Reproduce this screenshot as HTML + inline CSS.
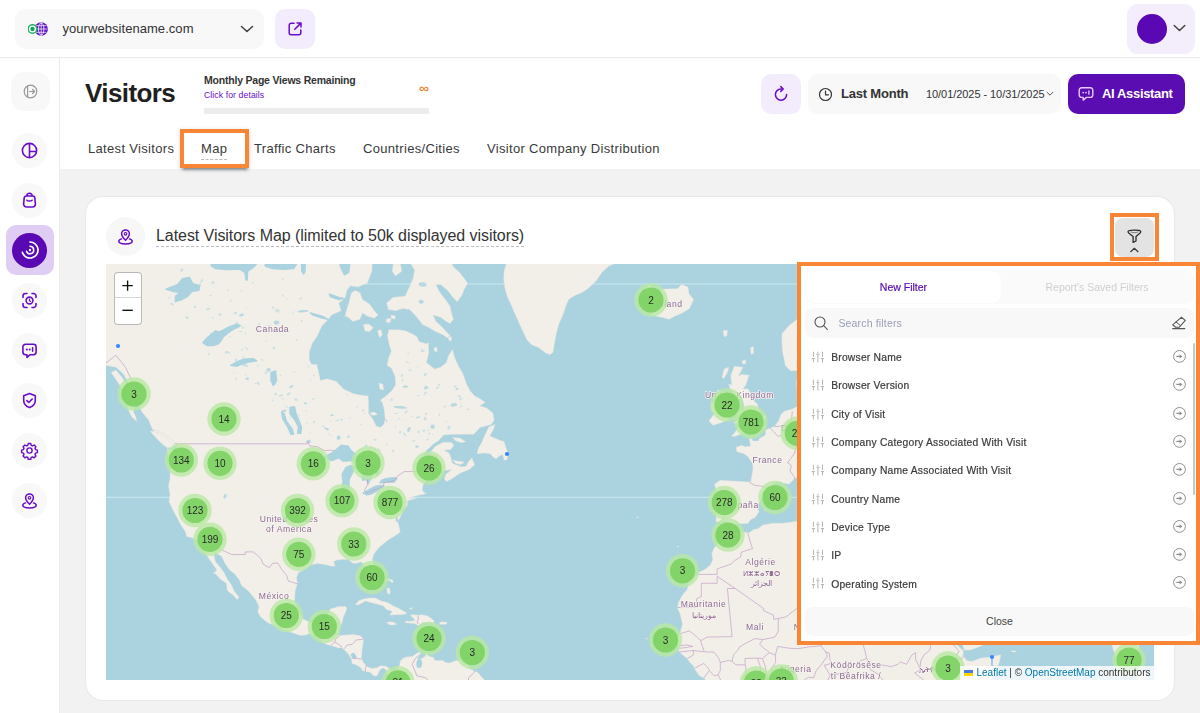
<!DOCTYPE html>
<html lang="en">
<head>
<meta charset="utf-8">
<title>Visitors - Map</title>
<style>
*{box-sizing:border-box;margin:0;padding:0}
html,body{width:1200px;height:713px;overflow:hidden}
body{font-family:"Liberation Sans",sans-serif;background:#f2f2f2;color:#333;position:relative}
.abs{position:absolute}
/* top bar */
#topbar{position:absolute;left:0;top:0;width:1200px;height:58px;background:#fff;border-bottom:1px solid #ebebeb}
#site{position:absolute;left:15px;top:9px;width:249px;height:40px;border-radius:11px;background:#f8f8f8}
#site .name{position:absolute;left:47.500px;top:12px;font-size:13px;color:#333;letter-spacing:.05px;white-space:nowrap}
#ext{position:absolute;left:275px;top:9px;width:40px;height:40px;border-radius:10px;background:#f3ecfd}
#profile{position:absolute;left:1127px;top:4px;width:68px;height:50px;border-radius:11px;background:#f4eefc}
#profile .av{position:absolute;left:10px;top:10px;width:30px;height:30px;border-radius:50%;background:#5a07b4}
/* sidebar */
#sidebar{position:absolute;left:0;top:58px;width:60px;height:655px;background:#fff;border-right:1px solid #ebebeb}
.sb{position:absolute;left:10.500px;width:39px;height:39px;border-radius:13px;background:#f8f8f8}
.sb svg{position:absolute;left:0;top:0}
.sb.r{left:12px;width:35px;height:35px;border-radius:50%}
.sb.r svg{left:-2px;top:-2px}
#sbact{position:absolute;left:5.600px;top:167.200px;width:48.300px;height:49.800px;border-radius:10px;background:#dfcdf4}
#sbact .c{position:absolute;left:6.700px;top:7.400px;width:35px;height:35px;border-radius:50%;background:#5a07b4}
/* header */
#header{position:absolute;left:60px;top:58px;width:1140px;height:111.400px;background:#fff}
#h1{position:absolute;left:25px;top:20px;font-size:26px;font-weight:bold;color:#1f1f1f;letter-spacing:-.6px;white-space:nowrap}
#mpv{position:absolute;left:144px;top:16px;font-size:10.500px;font-weight:bold;color:#333;white-space:nowrap;letter-spacing:-.21px}
#cfd{position:absolute;left:144px;top:31.500px;font-size:8.700px;color:#6a0dc9;white-space:nowrap;letter-spacing:.08px}
#pbar{position:absolute;left:144px;top:49.500px;width:225px;height:6.500px;background:#ececec;border-radius:1px}
#inf{position:absolute;left:359px;top:22.500px;font-size:14px;color:#f0883a;font-weight:bold;line-height:14px}
.hbtn{position:absolute;top:16px;height:40px;border-radius:10px}
#refresh{left:701px;width:40px;background:#f3ecfd}
#date{left:748px;width:253px;background:#f8f8f8}
#date .lm{position:absolute;left:33px;top:12px;font-size:13px;font-weight:bold;color:#333;white-space:nowrap;letter-spacing:-.2px}
#date .rng{position:absolute;left:118px;top:14px;font-size:11px;color:#333;white-space:nowrap;letter-spacing:-.06px}
#ai{left:1008px;width:117px;background:#5a0db0}
#ai span{position:absolute;left:34px;top:12px;font-size:13px;font-weight:bold;color:#fff;white-space:nowrap;letter-spacing:-.35px}
.tab{position:absolute;top:83px;font-size:13px;color:#3a3a3a;white-space:nowrap;letter-spacing:.32px}
#obox1{position:absolute;left:180px;top:129px;width:69px;height:39px;border:4px solid #f98634;box-shadow:0 3px 3px -1.500px rgba(30,40,50,.6),0 1px 5px rgba(0,0,0,.15)}
/* card */
#card{position:absolute;left:86px;top:197px;width:1088px;height:503px;background:#fff;border-radius:17px;box-shadow:0 0 2px rgba(0,0,0,.12)}
#cicon{position:absolute;left:20px;top:20px;width:39px;height:39px;border-radius:50%;background:#f7f7f7}
#ctitle{position:absolute;left:70px;top:30.300px;font-size:16px;color:#333;white-space:nowrap;border-bottom:1px dashed #bdbdbd;padding-bottom:.7px;letter-spacing:-.06px}
#fbtn{position:absolute;left:1115px;top:218px;width:39px;height:39px;border-radius:8px;background:#e3e3e3}
#obox2{position:absolute;left:1110px;top:213px;width:49px;height:48px;border:4px solid #f98634}
/* map */
#map{position:absolute;left:106px;top:264px;width:1048px;height:416px;overflow:hidden;background:#aad3df}
#map svg{position:absolute;left:0;top:0}
#zoomc{position:absolute;left:8px;top:8px;width:28px;height:53px;border:1.500px solid rgba(0,0,0,.22);border-radius:4px;background:#fff;background-clip:padding-box}
#zoomc div{height:24px;position:relative}
#zoomc div+div{border-top:1px solid #d4d4d4;height:26px}
#zoomc svg{position:absolute;left:0;top:0}
#attr{position:absolute;right:0;bottom:0;height:14px;width:194px;background:rgba(255,255,255,.8);font-size:10px;line-height:14px;color:#333;white-space:nowrap;padding-left:16.500px}
#attr b{font-weight:normal;color:#0078a8}
#attr i{position:absolute;left:4px;top:3.5px;width:9px;height:6px;background:linear-gradient(#4c7be1 50%,#ffd500 50%)}
/* panel */
#obox3{position:absolute;left:797px;top:262px;width:403px;height:383px;border:4px solid #f98634;background:#fff}
#panel{position:absolute;left:801px;top:266px;width:395px;height:375px;background:#fff;border-radius:8px 0 0 0}
#ptabs{position:absolute;left:4px;top:4px;width:389px;height:34px;border-radius:10px;background:#fafafa}
#ptabs .a{position:absolute;left:1px;top:1px;width:195px;height:32px;border-radius:9px;background:#fff;text-align:center;font-size:10.500px;line-height:32px;color:#5a0db0;-webkit-text-stroke:.2px #5a0db0}
#ptabs .b{position:absolute;left:195px;top:1px;width:194px;height:32px;text-align:center;font-size:10.5px;line-height:32px;color:#cfcfcf}
#psearch{position:absolute;left:4px;top:42px;width:389px;height:30px;border-radius:8px;background:#f8f8f8}
#psearch span{position:absolute;left:33.400px;top:9px;font-size:10.500px;color:#9a9fb8;white-space:nowrap;letter-spacing:.17px}
.row{position:absolute;left:0;width:396px;height:28px}
.row span{position:absolute;left:30.200px;top:9.200px;font-size:10.300px;color:#3a3a3a;white-space:nowrap;letter-spacing:.22px;-webkit-text-stroke:.2px #3a3a3a}
.row svg{position:absolute;top:0}
#pscroll{position:absolute;left:392px;top:77px;width:2px;height:152px;border-radius:2px;background:#c6c6c6}
#pclose{position:absolute;left:4px;top:341px;width:389px;height:29px;border-radius:8px;background:#f8f8f8;text-align:center;font-size:10.5px;line-height:29px;color:#444}
</style>
</head>
<body>

<!-- ===== TOP BAR ===== -->
<div id="topbar">
  <div id="site">
    <svg class="abs" style="left:13.300px;top:11.200px" width="22" height="18" viewBox="0 0 22 18">
      <circle cx="13.200" cy="9" r="6.700" fill="#5f10c2"/>
      <ellipse cx="13.200" cy="9" rx="2.700" ry="6.200" fill="none" stroke="#fff" stroke-width=".9" opacity=".9"/>
      <path d="M13.200 2.600v12.800M7 9h12.400M7.900 5.700h10.600M7.900 12.300h10.600" stroke="#fff" stroke-width=".85" fill="none" opacity=".85"/>
      <circle cx="4.500" cy="9" r="4.300" fill="#fff" stroke="#22b264" stroke-width="1.500"/>
      <circle cx="4.500" cy="9" r="2.200" fill="#10a552"/>
    </svg>
    <div class="name">yourwebsitename.com</div>
    <svg class="abs" style="left:225px;top:15px" width="14" height="10" viewBox="0 0 14 10"><path d="M1.5 2.5l5.5 5 5.5-5" fill="none" stroke="#444" stroke-width="1.6" stroke-linecap="round" stroke-linejoin="round"/></svg>
  </div>
  <div id="ext">
    <svg class="abs" style="left:12px;top:12px" width="16" height="16" viewBox="0 0 16 16"><path d="M7 2.2H4.2a2 2 0 0 0-2 2v7.6a2 2 0 0 0 2 2h7.6a2 2 0 0 0 2-2V9" fill="none" stroke="#6a0dc9" stroke-width="1.5" stroke-linecap="round"/><path d="M10 2h4v4M13.6 2.4L7.8 8.2" fill="none" stroke="#6a0dc9" stroke-width="1.5" stroke-linecap="round" stroke-linejoin="round"/></svg>
  </div>
  <div id="profile">
    <div class="av"></div>
    <svg class="abs" style="left:46px;top:20px" width="13" height="9" viewBox="0 0 13 9"><path d="M1.2 1.5l5.3 5 5.3-5" fill="none" stroke="#444" stroke-width="1.5" stroke-linecap="round" stroke-linejoin="round"/></svg>
  </div>
</div>

<!-- ===== SIDEBAR ===== -->
<div id="sidebar">
  <div class="sb" style="top:14px"><svg width="39" height="39" viewBox="0 0 39 39"><circle cx="19.5" cy="19.5" r="6.3" fill="none" stroke="#9a9a9a" stroke-width="1.2"/><path d="M16.6 14v11" stroke="#9a9a9a" stroke-width="1.2"/><path d="M18.6 19.5h5M21.6 17.5l2 2-2 2" fill="none" stroke="#9a9a9a" stroke-width="1.2" stroke-linecap="round" stroke-linejoin="round"/></svg></div>
  <div class="sb r" style="top:74.7px"><svg width="39" height="39" viewBox="0 0 39 39"><circle cx="19.500" cy="19.500" r="7.100" fill="none" stroke="#6a0dc9" stroke-width="1.600"/><path d="M19.500 12.500v14M19.500 20.500h7" stroke="#6a0dc9" stroke-width="1.6" fill="none"/></svg></div>
  <div class="sb r" style="top:124.7px"><svg width="39" height="39" viewBox="0 0 39 39"><path d="M14.2 17.2c0-1.2 1-2.2 2.2-2.2h6.2c1.2 0 2.2 1 2.2 2.2l.6 5.8c0 1.7-1.3 3-3 3h-5.800c-1.700 0-3-1.300-3-3z" fill="none" stroke="#6a0dc9" stroke-width="1.6" stroke-linejoin="round"/><path d="M16.800 15.200c0-1.700 1.200-2.900 2.700-2.900s2.700 1.200 2.700 2.900" fill="none" stroke="#6a0dc9" stroke-width="1.5"/><path d="M16.800 19.200c.8 1.200 4.600 1.200 5.400 0" fill="none" stroke="#6a0dc9" stroke-width="1.5" stroke-linecap="round"/></svg></div>
  <div id="sbact"><div class="c"></div><svg class="abs" style="left:4.200px;top:4.900px" width="40" height="40" viewBox="0 0 40 40"><path d="M20 12a8 8 0 1 1-7.600 10.400" fill="none" stroke="#fff" stroke-width="1.700" stroke-linecap="round"/><path d="M20 16.300a3.700 3.700 0 1 1-3.500 4.900" fill="none" stroke="#fff" stroke-width="1.600" stroke-linecap="round"/><circle cx="20" cy="20" r="1.200" fill="#fff"/></svg></div>
  <div class="sb r" style="top:224.7px"><svg width="39" height="39" viewBox="0 0 39 39"><path d="M13 16.500v-1.500a2.500 2.500 0 0 1 2.500-2.500h1.500M22 12.500h1.500a2.500 2.500 0 0 1 2.500 2.500v1.500M26 22.500v1.500a2.500 2.500 0 0 1-2.500 2.500h-1.500M17 26.500h-1.500a2.500 2.500 0 0 1-2.500-2.500v-1.500" fill="none" stroke="#6a0dc9" stroke-width="1.600" stroke-linecap="round"/><circle cx="19.500" cy="19.500" r="3.400" fill="none" stroke="#6a0dc9" stroke-width="1.600"/><path d="M19.500 18v1.700l1 .8" fill="none" stroke="#6a0dc9" stroke-width="1.100" stroke-linecap="round"/></svg></div>
  <div class="sb r" style="top:274.7px"><svg width="39" height="39" viewBox="0 0 39 39"><path d="M15.500 13.300h8a2.600 2.600 0 0 1 2.600 2.600v5.200a2.600 2.600 0 0 1-2.600 2.600h-3.300l-3.300 2.600v-2.600h-1.400a2.600 2.600 0 0 1-2.600-2.600v-5.200a2.600 2.600 0 0 1 2.600-2.600z" fill="none" stroke="#6a0dc9" stroke-width="1.600" stroke-linejoin="round"/><circle cx="16.800" cy="18.500" r="1" fill="#6a0dc9"/><circle cx="19.700" cy="18.500" r="1" fill="#6a0dc9"/><path d="M22.600 16.800v3.400" stroke="#6a0dc9" stroke-width="1.500" stroke-linecap="round"/></svg></div>
  <div class="sb r" style="top:324.7px"><svg width="39" height="39" viewBox="0 0 39 39"><path d="M19.500 12.600l5.800 2.200v4.600c0 3.300-2.400 5.800-5.800 7.200-3.400-1.400-5.800-3.900-5.800-7.200v-4.600z" fill="none" stroke="#6a0dc9" stroke-width="1.600" stroke-linejoin="round"/><path d="M16.900 19.600l1.900 1.900 3.400-3.500" fill="none" stroke="#6a0dc9" stroke-width="1.600" stroke-linecap="round" stroke-linejoin="round"/></svg></div>
  <div class="sb r" style="top:374.7px"><svg width="39" height="39" viewBox="0 0 39 39"><path d="M18.300 12.500h2.400l.5 1.800 1.300.6 1.700-.9 1.700 1.700-.9 1.700.6 1.300 1.800.5v2.400l-1.800.5-.6 1.300.9 1.700-1.700 1.700-1.700-.9-1.300.6-.5 1.800h-2.400l-.5-1.800-1.300-.6-1.700.9-1.700-1.700.9-1.700-.6-1.300-1.800-.5v-2.400l1.800-.5.6-1.300-.9-1.700 1.700-1.700 1.700.9 1.300-.6z" fill="none" stroke="#6a0dc9" stroke-width="1.400" stroke-linejoin="round"/><circle cx="19.500" cy="19.500" r="2.600" fill="none" stroke="#6a0dc9" stroke-width="1.400"/></svg></div>
  <div class="sb r" style="top:424.7px"><svg width="39" height="39" viewBox="0 0 39 39"><path d="M19.500 23.300c-2.600-2.700-3.900-4.700-3.900-6.500a3.900 3.900 0 0 1 7.800 0c0 1.800-1.300 3.800-3.900 6.500z" fill="none" stroke="#6a0dc9" stroke-width="1.500" stroke-linejoin="round"/><circle cx="19.500" cy="16.800" r="1.300" fill="none" stroke="#6a0dc9" stroke-width="1.200"/><path d="M15.600 21.900c-1.700.5-2.800 1.300-2.800 2.300 0 1.500 3 2.700 6.700 2.700s6.700-1.200 6.700-2.700c0-1-1.100-1.800-2.800-2.300" fill="none" stroke="#6a0dc9" stroke-width="1.500" stroke-linecap="round"/></svg></div>
</div>

<!-- ===== HEADER ===== -->
<div id="header">
  <div id="h1">Visitors</div>
  <div id="mpv">Monthly Page Views Remaining</div>
  <div id="cfd">Click for details</div>
  <div id="pbar"></div>
  <div id="inf">&#8734;</div>
  <div id="refresh" class="hbtn"><svg class="abs" style="left:11px;top:11px" width="18" height="18" viewBox="0 0 18 18"><path d="M14.600 9.600a5.600 5.600 0 1 1-5.600-5.600h1.600" fill="none" stroke="#6a0dc9" stroke-width="1.500" stroke-linecap="round"/><path d="M8.800 1.600l2.400 2.400-2.400 2.400" fill="none" stroke="#6a0dc9" stroke-width="1.500" stroke-linecap="round" stroke-linejoin="round"/></svg></div>
  <div id="date" class="hbtn">
    <svg class="abs" style="left:10px;top:13px" width="15" height="15" viewBox="0 0 15 15"><circle cx="7.500" cy="7.500" r="6" fill="none" stroke="#333" stroke-width="1.200"/><path d="M7.500 4v3.800h3" fill="none" stroke="#333" stroke-width="1.200" stroke-linecap="round" stroke-linejoin="round"/></svg>
    <div class="lm">Last Month</div>
    <div class="rng">10/01/2025 - 10/31/2025</div>
    <svg class="abs" style="left:238px;top:17px" width="8" height="6" viewBox="0 0 8 6"><path d="M1 1.200l3 3 3-3" fill="none" stroke="#555" stroke-width="1" stroke-linecap="round" stroke-linejoin="round"/></svg>
  </div>
  <div id="ai" class="hbtn">
    <svg class="abs" style="left:9px;top:11px" width="18" height="18" viewBox="0 0 18 18"><path d="M4.500 2.800h9a2.300 2.300 0 0 1 2.300 2.300v5a2.300 2.300 0 0 1-2.300 2.300h-4l-3.300 2.700v-2.700h-1.700a2.300 2.300 0 0 1-2.300-2.300v-5a2.300 2.300 0 0 1 2.300-2.300z" fill="none" stroke="#e9c9ff" stroke-width="1.400" stroke-linejoin="round"/><circle cx="6.200" cy="7.600" r=".9" fill="#e9c9ff"/><circle cx="9" cy="7.600" r=".9" fill="#e9c9ff"/><path d="M11.900 6v3.200" stroke="#e9c9ff" stroke-width="1.300" stroke-linecap="round"/></svg>
    <span>AI Assistant</span>
  </div>
  <div class="tab" style="left:28px">Latest Visitors</div>
  <div class="tab" style="left:141px;border-bottom:1px dashed #bbb;padding-bottom:2.500px">Map</div>
  <div class="tab" style="left:194px">Traffic Charts</div>
  <div class="tab" style="left:303px">Countries/Cities</div>
  <div class="tab" style="left:427px">Visitor Company Distribution</div>
</div>
<div id="obox1"></div>

<!-- ===== CARD ===== -->
<div id="card">
  <div id="cicon"><svg width="39" height="39" viewBox="0 0 39 39"><path d="M19.500 23.300c-2.600-2.700-3.900-4.700-3.900-6.500a3.900 3.900 0 0 1 7.800 0c0 1.800-1.300 3.800-3.900 6.500z" fill="none" stroke="#6a0dc9" stroke-width="1.500" stroke-linejoin="round"/><circle cx="19.500" cy="16.800" r="1.300" fill="none" stroke="#6a0dc9" stroke-width="1.200"/><path d="M15.600 21.900c-1.700.5-2.800 1.300-2.800 2.300 0 1.500 3 2.700 6.700 2.700s6.700-1.200 6.700-2.700c0-1-1.100-1.800-2.800-2.300" fill="none" stroke="#6a0dc9" stroke-width="1.500" stroke-linecap="round"/></svg></div>
  <div id="ctitle">Latest Visitors Map (limited to 50k displayed visitors)</div>
</div>
<div id="fbtn"><svg width="40" height="39" viewBox="0 0 40 39"><path d="M13 13.800C13 12.600 15.500 12.100 19.400 12.100S25.800 12.600 25.800 13.800C25.800 14.800 24.500 15.600 23.300 16.600L21 18.600V23L18.100 24.400V18.600L15.500 16.600C14.300 15.600 13 14.800 13 13.800Z" fill="none" stroke="#2a2a2a" stroke-width="1.300" stroke-linejoin="round"/><path d="M15.800 13.900C17 14.900 21.800 14.900 23 13.900" fill="none" stroke="#8a8a8a" stroke-width="1.100" stroke-linecap="round"/><path d="M15.700 33.700l3.650-3.400 3.650 3.400" fill="none" stroke="#3a3a3a" stroke-width="1.200" stroke-linecap="round" stroke-linejoin="round"/></svg></div>
<div id="obox2"></div>

<!-- ===== MAP ===== -->
<div id="map">
<svg width="1048" height="416" viewBox="0 0 1048 416">
<rect width="1048" height="416" fill="#aad3df"/>
<rect x="0" y="19.5" width="1048" height="1" fill="#e6fbff" opacity=".55"/>
<rect x="0" y="232.8" width="1048" height="1" fill="#e6fbff" opacity=".55"/>
<path d="M-20.9 -38.5L273.0 -38.5L266.8 -10.8L265.9 7.2L261.2 19.3L251.7 22.9L244.6 21.7L240.8 26.4L238.9 34.5L232.7 39.0L235.1 46.7L225.6 51.0L222.3 55.3L216.1 61.6L211.4 71.8L206.6 78.7L203.3 87.4L203.3 95.9L205.7 100.5L210.9 100.5L213.3 111.3L214.2 116.6L220.9 114.8L230.3 117.4L237.5 125.1L246.9 129.4L254.0 131.0L262.1 131.9L262.6 140.1L262.6 149.6L266.8 155.1L270.2 162.0L274.4 163.5L277.7 160.5L279.2 155.1L278.2 145.7L276.3 138.4L274.4 136.0L280.1 131.9L285.8 126.8L289.6 120.9L289.1 112.2L285.3 104.1L281.1 101.4L282.5 94.0L285.3 87.4L283.0 79.7L281.5 71.8L283.0 65.7L292.0 65.7L299.1 66.7L306.2 69.8L310.9 72.8L313.3 77.7L320.4 79.7L322.3 78.7L322.8 89.3L320.4 98.7L322.8 100.5L328.5 105.0L334.6 103.2L340.3 98.7L342.7 91.2L346.5 85.5L348.8 94.0L352.6 102.3L356.9 109.5L360.2 119.2L364.0 126.8L368.7 131.9L374.9 135.2L379.2 138.4L373.5 141.7L380.6 144.1L386.8 148.9L388.2 155.9L385.3 160.5L379.7 162.0L374.0 163.5L367.8 170.3L358.3 170.3L348.8 170.3L337.5 171.0L332.3 176.9L327.5 179.8L321.8 185.5L317.6 191.9L319.5 194.0L324.2 188.4L328.9 182.7L337.0 178.3L345.0 178.3L347.9 181.2L345.0 185.5L337.9 186.2L343.2 189.1L345.0 194.0L346.5 199.5L350.3 200.9L356.0 202.9L360.2 202.2L362.1 198.1L365.9 194.0L368.7 200.9L363.1 205.6L353.6 209.6L346.5 214.3L340.8 217.5L338.4 214.9L339.8 210.3L346.0 205.6L341.3 206.3L334.6 206.9L334.6 211.0L327.5 212.3L320.4 216.2L317.1 220.8L316.6 224.0L316.1 226.0L318.0 228.5L320.4 229.1L317.6 230.4L313.3 231.0L308.6 232.3L302.9 234.2L310.9 234.2L302.4 236.4L301.4 236.7L301.4 241.6L297.2 245.9L294.8 243.5L296.2 249.0L292.4 256.8L290.5 249.0L289.6 256.8L292.0 258.6L293.4 263.9L294.3 268.0L289.6 271.4L283.0 275.4L277.7 279.4L273.0 283.4L268.3 289.5L266.4 295.1L267.3 300.5L270.6 307.0L273.0 314.0L272.5 320.3L271.1 323.5L267.8 323.5L264.5 318.2L260.2 310.3L259.7 303.3L255.0 297.8L251.7 298.9L247.4 299.4L242.2 295.6L235.1 295.6L230.3 296.2L227.5 297.8L229.4 302.2L225.6 302.2L218.5 300.5L211.4 299.4L204.3 301.1L199.5 304.9L192.4 308.6L190.5 314.0L191.5 319.3L189.1 327.2L188.6 337.5L191.0 345.1L194.8 351.2L197.2 355.2L201.9 357.2L205.2 359.2L211.4 358.2L217.1 357.2L220.9 354.2L223.2 347.7L224.2 345.1L232.7 342.6L239.8 342.6L240.8 345.1L237.5 352.7L236.0 358.7L234.1 362.7L231.8 370.1L233.7 371.6L239.8 371.1L246.9 370.6L254.0 371.6L257.8 375.1L256.9 380.0L255.9 387.3L255.5 394.5L257.4 398.4L261.2 402.7L265.9 404.6L270.6 403.7L274.9 401.8L280.1 402.2L285.3 406.1L287.7 409.0L290.5 405.1L293.4 401.8L294.3 396.9L297.6 394.1L300.5 393.1L306.2 392.6L310.9 389.2L314.2 387.8L314.2 391.1L311.4 394.1L312.8 396.0L315.7 394.5L319.5 392.1L319.5 389.2L321.3 389.2L322.3 392.1L327.5 393.6L328.9 396.5L337.0 396.5L339.4 398.4L344.1 398.9L348.8 396.9L353.6 396.0L358.3 396.0L355.5 397.9L357.4 399.4L363.1 401.8L364.0 405.1L367.8 406.6L372.5 409.0L374.9 412.3L377.3 414.7L380.6 418.5L382.0 428.0L284.9 428.0L285.3 416.1L283.0 412.8L281.5 409.0L280.1 406.1L277.7 404.2L275.4 404.6L273.0 407.5L271.6 411.3L268.3 412.3L265.9 409.9L263.5 408.0L258.8 407.5L255.9 406.1L255.5 404.2L250.2 400.8L246.0 399.4L245.5 395.0L242.2 389.7L237.5 385.3L236.0 383.4L232.7 383.9L226.5 381.9L220.9 380.5L215.2 377.5L209.0 371.6L204.3 369.2L199.5 371.1L194.8 371.6L187.7 369.2L179.1 366.2L171.1 362.2L161.6 358.7L154.5 352.7L151.7 347.7L153.1 342.6L149.8 336.0L142.7 327.2L135.5 321.4L133.2 315.6L128.4 309.7L123.7 306.0L119.0 299.4L115.6 292.3L109.0 288.4L108.0 292.3L109.5 297.8L114.2 303.3L118.0 308.6L121.3 315.1L125.1 320.3L128.4 327.2L133.2 333.4L130.8 335.4L128.4 332.3L121.3 326.6L120.4 319.3L114.2 315.1L109.5 309.7L107.1 309.7L110.9 306.0L107.1 300.5L102.4 294.0L99.0 287.9L97.1 283.9L96.2 280.0L91.5 276.6L90.5 275.4L85.8 273.7L80.6 272.6L79.6 268.0L74.4 260.3L71.6 254.4L69.2 250.2L65.4 242.9L63.0 237.3L64.0 230.4L62.5 222.1L64.0 214.3L64.4 200.9L64.0 195.4L61.1 184.8L66.8 185.5L71.6 190.5L70.6 180.5L68.2 177.6L62.1 172.5L57.3 168.8L46.4 165.0L42.6 155.9L36.0 148.1L32.2 139.2L33.6 133.5L27.5 128.5L24.1 120.9L17.0 109.5L9.9 103.2L-0.0 101.4L-6.7 94.0L-20.9 89.3ZM67.3 184.1L60.6 183.4L55.9 179.8L50.2 174.0L44.1 167.3L47.9 167.3L55.0 170.3L59.7 173.2L64.4 178.3L66.8 181.2ZM68.2 177.6L62.1 172.5L57.3 168.8L46.4 165.0L47.9 167.3L55.0 170.3L59.7 173.2L64.4 178.3L66.8 181.2L69.2 182.7L70.6 180.5ZM30.8 157.4L25.6 152.8L21.3 143.3L23.2 140.1L27.9 141.7L27.5 148.1L29.8 152.8ZM21.8 136.0L18.5 129.4L14.7 122.6L9.5 114.8L5.2 108.6L9.9 105.9L17.0 114.8L22.7 125.1L25.6 133.5ZM371.1 189.8L372.5 184.1L375.9 178.3L378.2 172.5L381.1 166.5L383.0 162.8L389.1 160.5L387.2 165.8L383.9 171.8L386.8 173.2L390.1 174.7L393.9 176.2L398.1 177.6L399.6 182.7L401.0 187.0L402.4 189.8L401.0 196.0L398.1 196.0L396.7 190.5L393.4 191.9L390.1 194.7L387.2 193.3L384.4 189.8L377.3 189.1ZM346.5 173.6L353.6 174.0L359.7 177.6L356.0 178.7L349.8 176.9ZM346.9 196.0L351.2 197.1L356.9 197.8L358.3 198.8L354.5 200.5L349.8 199.5L347.9 197.4ZM249.3 340.6L253.1 336.5L257.8 334.9L263.5 333.9L269.2 334.1L275.4 337.0L281.5 338.5L286.7 341.6L292.9 344.6L300.5 348.7L300.0 350.0L294.3 350.7L283.9 351.0L286.3 347.2L280.6 345.7L277.7 342.1L270.6 340.1L264.5 338.5L259.7 337.0L255.9 339.0L252.1 341.1ZM299.1 358.5L303.8 359.2L308.6 359.5L312.3 361.5L316.6 358.7L321.3 358.2L326.6 359.2L328.5 357.2L325.1 354.2L320.9 351.7L315.7 350.7L311.9 351.2L306.2 350.5L304.3 351.7L307.1 353.7L309.0 356.7L303.8 357.2L299.5 357.0ZM280.6 358.7L283.4 357.7L287.7 358.2L291.0 360.2L287.7 361.0L283.9 361.0ZM333.4 358.5L337.0 357.7L341.3 358.5L340.3 360.2L336.0 360.5L333.7 360.2ZM281.1 324.0L283.4 324.0L284.4 328.2L283.0 330.8L281.1 328.2ZM278.7 315.6L283.0 315.1L286.7 316.1L287.2 318.2L285.8 318.8L283.9 316.4L279.2 316.6ZM358.8 396.0L363.5 395.3L363.1 398.9L358.8 399.1ZM302.9 344.6L306.2 343.6L305.7 345.4ZM273.0 -38.5L348.8 -38.5L346.5 2.1L353.6 8.4L358.3 14.5L361.6 19.3L358.3 25.2L356.0 31.0L351.2 37.8L346.0 32.2L341.7 26.4L334.6 20.5L329.9 20.5L333.2 27.6L339.4 35.6L344.1 42.3L345.5 48.9L347.4 55.3L344.1 59.5L340.3 57.4L334.6 53.2L327.0 51.0L329.9 57.4L335.6 62.6L340.3 67.7L344.1 71.8L341.3 73.8L337.0 70.8L329.9 67.7L322.8 63.6L316.6 60.5L310.9 53.2L303.8 45.6L296.7 44.5L289.6 46.7L282.5 45.6L280.6 39.0L287.2 33.3L299.1 32.2L302.9 24.1L307.1 14.5L308.6 5.9L303.8 -1.7L294.3 -4.3L287.2 -10.8L273.0 -17.5ZM239.8 48.9L243.1 37.8L245.5 28.7L249.3 26.4L254.0 28.7L256.4 35.6L263.5 40.1L268.3 46.7L272.1 51.0L268.3 54.2L261.2 52.1L256.4 48.9L254.0 55.3L246.9 57.4L242.2 53.2L238.9 52.1ZM257.4 60.5L262.6 60.0L267.3 63.6L263.5 67.7L258.8 66.7ZM271.6 66.7L274.9 65.7L276.3 70.8L273.5 73.8ZM280.1 55.3L284.9 54.2L284.4 58.4L280.6 58.4ZM284.9 51.0L289.6 52.1L288.6 55.3L285.3 54.2ZM287.2 -0.4L294.3 -0.4L295.8 7.2L289.6 12.1L286.3 7.2ZM263.5 148.9L268.3 148.1L271.6 150.4L266.8 151.6ZM273.0 119.2L276.8 120.0L277.7 126.0L273.9 125.1ZM328.0 83.6L330.8 83.6L331.3 87.4L328.5 87.4ZM342.2 72.8L345.5 72.8L345.5 76.7L342.7 76.2ZM386.8 -38.5L396.2 -17.5L410.5 -13.5L410.5 -5.6L401.0 -3.0L398.1 7.2L397.7 15.7L399.1 25.2L401.5 33.3L404.8 40.1L407.6 46.7L412.4 57.4L417.1 67.7L420.9 75.8L425.6 80.7L432.7 83.6L438.9 88.4L443.6 90.7L447.0 88.4L448.4 79.7L450.3 69.8L453.1 59.5L456.9 51.0L459.8 42.3L462.6 35.6L469.7 31.0L475.9 28.7L482.5 24.1L490.1 16.9L495.8 8.4L502.9 2.1L514.7 -3.0L529.0 -5.6L538.4 -38.5ZM536.1 32.2L539.4 25.2L543.2 21.1L547.0 24.1L550.3 32.2L556.0 25.2L564.5 24.7L571.6 24.7L575.4 20.5L582.0 22.9L583.0 29.9L587.7 35.6L583.5 44.5L576.4 48.9L569.2 52.1L563.1 55.3L555.0 53.2L545.1 51.0L548.4 45.6L547.0 41.2L538.4 39.0L545.6 35.6L540.8 33.3ZM617.1 66.7L621.4 66.2L620.9 71.8L618.1 72.8ZM644.6 83.6L647.5 82.6L647.5 89.3L645.1 90.3ZM636.1 96.8L639.9 95.9L639.4 100.0L636.6 100.0ZM618.1 105.0L622.8 103.2L621.4 108.6L617.6 114.8L616.2 113.1ZM604.8 159.0L607.2 161.3L614.3 159.0L621.9 155.9L623.3 149.6L622.8 142.5L625.7 137.6L622.8 131.9L616.7 131.0L611.9 136.0L604.8 140.1L605.3 146.5L609.1 148.9L606.2 152.8L602.9 156.7ZM625.2 171.8L628.5 172.5L635.1 170.3L638.0 167.3L645.1 167.3L653.1 166.5L658.8 163.5L655.5 161.3L660.3 152.8L653.6 149.6L652.7 144.9L651.3 140.1L646.0 135.2L644.6 129.4L642.2 125.1L637.0 124.7L639.9 120.9L642.7 112.2L643.7 111.3L635.6 110.4L632.3 112.2L637.0 103.2L628.5 102.3L624.7 111.3L625.7 120.9L622.8 120.0L625.7 130.2L629.4 128.5L628.0 135.2L635.6 134.3L638.0 141.7L637.5 146.5L630.9 147.3L632.3 151.2L630.4 152.0L633.2 154.3L627.6 159.0L633.2 160.5L638.0 162.0L637.0 163.5L631.8 164.3L627.6 170.3ZM747.0 -24.3L723.3 -4.3L718.6 8.4L712.4 20.5L707.2 32.2L701.0 44.5L692.5 54.2L683.0 61.6L675.9 69.8L675.9 79.7L676.8 89.3L678.3 95.9L679.2 101.4L684.4 106.8L690.1 106.8L694.9 102.3L709.1 107.7L709.1 116.6L690.6 116.6L691.1 129.4L693.0 141.7L686.3 144.9L678.3 147.3L675.0 150.4L672.6 156.7L668.8 162.0L664.1 164.3L659.8 165.8L659.3 171.0L653.1 174.7L652.7 176.9L646.5 176.9L646.0 174.7L643.2 174.7L644.6 182.0L638.9 182.7L635.6 181.2L629.9 183.4L630.9 187.7L638.0 189.8L641.8 192.6L646.5 199.5L647.0 204.3L646.0 211.0L644.6 218.2L635.6 217.5L626.1 216.9L614.3 216.2L608.6 220.2L610.5 227.2L611.0 233.6L609.5 242.9L607.2 247.2L610.5 249.6L610.0 258.0L614.8 258.0L619.0 256.8L621.9 259.2L623.8 262.7L626.6 263.3L631.3 259.7L638.0 259.7L642.2 259.2L644.6 255.6L648.9 253.8L653.1 247.8L650.8 242.9L655.5 234.8L656.9 233.6L662.6 231.0L667.4 227.9L666.9 224.0L666.4 219.5L671.2 217.5L677.3 218.9L683.0 220.2L687.8 215.6L692.0 212.3L709.1 212.3L747.0 214.3ZM663.6 242.3L666.9 240.1L668.6 242.3L666.4 244.1ZM657.9 245.9L659.8 245.3L659.3 246.9ZM670.2 239.5L672.6 240.1L672.1 240.7ZM694.9 256.8L685.4 258.0L675.9 259.2L666.4 259.2L656.9 260.9L652.2 264.5L647.5 265.6L642.7 269.1L638.0 268.0L630.9 268.5L626.6 264.5L624.2 265.0L622.3 270.8L620.0 275.4L616.2 277.7L611.9 280.0L608.1 283.9L605.7 289.5L606.7 295.6L604.3 301.1L599.6 304.9L591.1 309.2L588.7 314.0L583.5 318.2L581.1 325.6L576.4 331.3L572.1 339.0L571.6 345.1L574.0 349.2L575.4 355.2L576.4 360.2L574.0 369.2L571.1 375.1L569.2 376.5L572.6 380.9L572.6 387.3L576.4 390.7L581.1 394.5L583.5 397.9L587.3 401.8L589.6 406.6L593.0 411.3L597.7 414.2L601.0 417.1L604.8 419.5L609.5 428.0L879.7 428.0L884.5 416.1L889.2 409.0L893.0 399.4L894.9 390.7L884.5 393.1L875.0 394.1L865.5 397.4L860.8 396.5L857.0 392.1L857.4 386.8L853.7 383.4L846.5 376.0L846.5 263.9L694.9 263.9ZM858.4 386.3L865.5 385.8L872.6 382.9L879.7 380.0L884.5 377.0L884.5 370.1L856.0 370.1L857.0 382.4ZM905.3 386.8L910.5 387.0L909.6 388.0L905.8 388.0ZM1003.9 370.1L1005.8 380.0L1007.7 387.3L1011.5 393.6L1013.9 400.3L1017.2 407.0L1019.6 408.5L1022.9 404.6L1026.7 402.7L1030.5 397.9L1030.9 389.7L1032.8 383.9L1031.9 370.1ZM1030.5 406.6L1030.9 414.2L1032.3 418.0L1037.1 417.1L1039.9 412.8L1037.6 406.6L1032.8 400.8ZM572.1 306.8L575.9 305.7L574.5 308.4ZM577.3 308.1L579.2 307.8L579.2 309.7L577.8 309.7ZM583.9 308.1L586.3 304.9L588.2 302.2L586.8 306.0ZM570.7 282.3L573.0 282.3L572.6 283.1ZM529.9 252.9L532.8 252.9L532.3 253.8ZM539.9 374.1L541.3 374.1L540.8 375.6Z" fill="#f2efe9" stroke="#e3e1dc" stroke-width=".4" stroke-linejoin="round"/>
<path d="M104.3 -24.3L105.2 2.1L109.5 4.7L121.3 5.7L133.2 5.3L138.9 8.4L139.8 15.7L141.2 16.3L141.7 7.2L147.4 3.4L152.1 -1.7L152.6 -24.3ZM157.8 -24.3L159.2 2.1L166.4 4.7L178.2 5.3L187.7 4.7L191.0 -0.4L192.4 -24.3ZM232.2 -24.3L234.1 2.1L238.4 10.9L242.7 8.4L244.6 -4.3L245.5 -24.3ZM194.8 -24.3L195.7 7.2L197.6 10.2L199.1 7.2L200.0 -24.3ZM59.7 25.2L65.4 22.9L71.6 20.5L76.3 14.5L83.4 13.3L86.7 19.3L93.8 21.7L92.9 26.4L85.8 27.6L82.0 32.2L76.3 35.6L69.2 37.8L69.2 32.2L73.9 28.7L67.8 27.6ZM96.7 78.7L100.0 74.8L104.7 70.8L109.5 66.7L112.8 67.7L116.6 66.2L123.7 62.6L130.8 60.0L134.6 61.6L128.4 64.7L122.3 68.7L117.5 72.8L115.2 76.7L112.8 79.7L107.1 81.6L100.9 81.6ZM124.6 101.4L130.8 97.7L137.9 95.0L147.4 94.5L150.7 96.8L140.3 98.7L130.8 102.3ZM164.9 108.6L169.7 106.8L170.6 116.6L167.3 121.7L164.9 116.6ZM183.9 143.3L188.6 142.5L190.1 149.6L193.4 157.4L195.7 163.5L194.8 169.5L191.5 169.5L192.4 162.8L188.6 155.9L183.9 149.6ZM175.4 148.1L178.2 149.6L180.6 157.4L186.3 165.0L187.7 170.3L184.8 170.3L181.5 162.8L176.8 155.1ZM215.6 196.0L220.9 194.7L225.6 196.7L232.7 194.0L237.5 197.4L244.6 196.7L251.2 197.4L250.2 190.5L245.5 187.0L242.2 182.0L235.1 181.2L230.3 185.5L225.6 189.1L218.5 192.6ZM236.0 229.1L240.3 229.1L243.1 224.0L243.1 215.6L246.5 209.0L249.3 202.9L244.6 201.5L239.8 203.6L236.0 210.3L237.0 217.5L235.6 224.0ZM251.2 200.9L256.4 200.2L264.5 200.9L270.6 204.3L273.9 209.0L270.6 211.0L266.8 206.9L264.9 214.3L262.1 220.2L260.7 215.6L256.4 216.2L256.4 209.0L257.4 205.6L252.6 202.9ZM256.9 229.1L261.2 231.0L265.9 229.8L273.0 226.0L278.2 222.1L273.9 221.4L268.3 222.7L261.2 226.6ZM273.9 218.9L280.1 218.5L288.2 218.2L291.0 214.3L287.2 213.6L280.1 214.6L275.4 216.2ZM311.9 396.0L314.7 396.0L315.7 399.4L314.7 403.2L311.4 403.2L310.9 399.4ZM245.0 390.7L247.4 389.2L250.2 392.6L248.8 394.5L246.5 393.1ZM204.3 48.9L216.1 52.1L222.3 55.3L216.1 54.2L206.6 51.0ZM223.2 29.9L232.7 33.3L238.9 34.5L232.7 35.6L224.2 32.8ZM321.8 185.5L317.6 191.9L314.7 195.0L319.5 194.0L324.2 188.4Z" fill="#aad3df" stroke="#aad3df" stroke-width="1.2" stroke-linejoin="round"/>
<g fill="#aad3df" opacity=".55"><ellipse cx="264.8" cy="183.2" rx="1.4" ry="0.8" transform="rotate(-53 264.8 183.2)"/><ellipse cx="321.5" cy="175.4" rx="0.9" ry="1.0" transform="rotate(54 321.5 175.4)"/><ellipse cx="241.0" cy="130.8" rx="2.2" ry="0.4" transform="rotate(43 241.0 130.8)"/><ellipse cx="318.0" cy="166.6" rx="1.5" ry="1.0" transform="rotate(-15 318.0 166.6)"/><ellipse cx="156.2" cy="95.9" rx="1.3" ry="0.7" transform="rotate(35 156.2 95.9)"/><ellipse cx="280.3" cy="156.5" rx="1.5" ry="0.9" transform="rotate(45 280.3 156.5)"/><ellipse cx="290.1" cy="149.3" rx="2.2" ry="0.5" transform="rotate(-10 290.1 149.3)"/><ellipse cx="299.0" cy="171.1" rx="1.3" ry="0.4" transform="rotate(20 299.0 171.1)"/><ellipse cx="301.4" cy="98.3" rx="2.0" ry="0.7" transform="rotate(23 301.4 98.3)"/><ellipse cx="269.0" cy="185.0" rx="1.7" ry="1.0" transform="rotate(59 269.0 185.0)"/><ellipse cx="319.9" cy="149.8" rx="1.2" ry="1.1" transform="rotate(-57 319.9 149.8)"/><ellipse cx="203.8" cy="168.6" rx="0.7" ry="0.5" transform="rotate(32 203.8 168.6)"/><ellipse cx="181.0" cy="34.5" rx="0.6" ry="0.8" transform="rotate(6 181.0 34.5)"/><ellipse cx="333.4" cy="150.8" rx="1.2" ry="0.8" transform="rotate(46 333.4 150.8)"/><ellipse cx="130.2" cy="114.9" rx="1.5" ry="0.7" transform="rotate(-60 130.2 114.9)"/><ellipse cx="190.0" cy="135.5" rx="1.5" ry="1.4" transform="rotate(23 190.0 135.5)"/><ellipse cx="272.9" cy="186.0" rx="2.0" ry="1.2" transform="rotate(45 272.9 186.0)"/><ellipse cx="312.1" cy="131.5" rx="1.2" ry="0.5" transform="rotate(16 312.1 131.5)"/><ellipse cx="63.2" cy="33.8" rx="1.5" ry="0.5" transform="rotate(-30 63.2 33.8)"/><ellipse cx="166.9" cy="136.4" rx="0.7" ry="1.2" transform="rotate(59 166.9 136.4)"/><ellipse cx="205.2" cy="115.2" rx="0.6" ry="0.5" transform="rotate(-19 205.2 115.2)"/><ellipse cx="140.3" cy="44.4" rx="0.8" ry="0.4" transform="rotate(54 140.3 44.4)"/><ellipse cx="225.2" cy="171.9" rx="1.4" ry="0.4" transform="rotate(3 225.2 171.9)"/><ellipse cx="303.8" cy="106.1" rx="1.8" ry="0.7" transform="rotate(-33 303.8 106.1)"/><ellipse cx="128.0" cy="108.9" rx="1.1" ry="0.4" transform="rotate(-57 128.0 108.9)"/><ellipse cx="120.8" cy="88.3" rx="2.0" ry="1.2" transform="rotate(-2 120.8 88.3)"/><ellipse cx="296.7" cy="116.2" rx="0.8" ry="1.2" transform="rotate(-20 296.7 116.2)"/><ellipse cx="182.5" cy="129.9" rx="2.1" ry="1.1" transform="rotate(-40 182.5 129.9)"/><ellipse cx="102.1" cy="45.0" rx="2.2" ry="1.1" transform="rotate(-18 102.1 45.0)"/><ellipse cx="231.8" cy="174.3" rx="0.5" ry="1.4" transform="rotate(18 231.8 174.3)"/><ellipse cx="194.8" cy="34.4" rx="1.9" ry="0.6" transform="rotate(-30 194.8 34.4)"/><ellipse cx="244.0" cy="154.0" rx="1.2" ry="0.5" transform="rotate(49 244.0 154.0)"/><ellipse cx="169.0" cy="119.8" rx="1.5" ry="1.3" transform="rotate(-10 169.0 119.8)"/><ellipse cx="312.5" cy="167.9" rx="1.3" ry="1.1" transform="rotate(7 312.5 167.9)"/><ellipse cx="160.0" cy="108.8" rx="1.4" ry="1.2" transform="rotate(-47 160.0 108.8)"/><ellipse cx="235.6" cy="155.7" rx="1.0" ry="1.2" transform="rotate(1 235.6 155.7)"/><ellipse cx="349.1" cy="122.5" rx="1.5" ry="0.9" transform="rotate(1 349.1 122.5)"/><ellipse cx="138.6" cy="100.9" rx="2.1" ry="1.2" transform="rotate(-44 138.6 100.9)"/><ellipse cx="104.7" cy="69.4" rx="1.6" ry="0.5" transform="rotate(46 104.7 69.4)"/><ellipse cx="323.3" cy="169.6" rx="1.2" ry="0.9" transform="rotate(-19 323.3 169.6)"/><ellipse cx="75.7" cy="6.1" rx="1.8" ry="1.4" transform="rotate(-47 75.7 6.1)"/><ellipse cx="306.0" cy="152.2" rx="0.7" ry="0.8" transform="rotate(49 306.0 152.2)"/><ellipse cx="318.9" cy="154.1" rx="0.8" ry="1.3" transform="rotate(8 318.9 154.1)"/><ellipse cx="280.7" cy="180.7" rx="0.6" ry="1.1" transform="rotate(-9 280.7 180.7)"/><ellipse cx="78.3" cy="18.1" rx="1.6" ry="1.2" transform="rotate(-50 78.3 18.1)"/><ellipse cx="333.0" cy="120.6" rx="1.1" ry="1.0" transform="rotate(51 333.0 120.6)"/><ellipse cx="224.8" cy="157.4" rx="0.7" ry="0.6" transform="rotate(-54 224.8 157.4)"/><ellipse cx="153.3" cy="60.0" rx="1.0" ry="0.9" transform="rotate(-39 153.3 60.0)"/><ellipse cx="318.9" cy="124.5" rx="1.3" ry="1.2" transform="rotate(-13 318.9 124.5)"/><ellipse cx="293.8" cy="154.6" rx="0.8" ry="0.5" transform="rotate(41 293.8 154.6)"/><ellipse cx="149.4" cy="119.6" rx="0.8" ry="0.8" transform="rotate(-28 149.4 119.6)"/><ellipse cx="231.3" cy="156.4" rx="2.1" ry="0.7" transform="rotate(-17 231.3 156.4)"/><ellipse cx="207.9" cy="111.7" rx="0.8" ry="0.9" transform="rotate(-59 207.9 111.7)"/><ellipse cx="130.0" cy="95.9" rx="1.4" ry="1.2" transform="rotate(19 130.0 95.9)"/><ellipse cx="180.5" cy="142.9" rx="2.2" ry="0.5" transform="rotate(27 180.5 142.9)"/><ellipse cx="262.3" cy="187.5" rx="1.9" ry="1.3" transform="rotate(15 262.3 187.5)"/><ellipse cx="88.8" cy="42.8" rx="1.4" ry="1.0" transform="rotate(15 88.8 42.8)"/><ellipse cx="296.1" cy="111.6" rx="1.4" ry="1.1" transform="rotate(-52 296.1 111.6)"/><ellipse cx="292.4" cy="155.1" rx="0.6" ry="0.7" transform="rotate(28 292.4 155.1)"/><ellipse cx="121.1" cy="64.3" rx="2.2" ry="0.9" transform="rotate(-14 121.1 64.3)"/><ellipse cx="302.2" cy="89.7" rx="1.6" ry="0.5" transform="rotate(-42 302.2 89.7)"/><ellipse cx="136.8" cy="63.6" rx="1.0" ry="1.0" transform="rotate(-59 136.8 63.6)"/><ellipse cx="343.0" cy="163.7" rx="2.2" ry="1.3" transform="rotate(-58 343.0 163.7)"/><ellipse cx="242.4" cy="172.7" rx="1.4" ry="1.4" transform="rotate(-44 242.4 172.7)"/><ellipse cx="319.3" cy="110.5" rx="2.0" ry="1.1" transform="rotate(-32 319.3 110.5)"/><ellipse cx="344.3" cy="114.7" rx="0.5" ry="0.4" transform="rotate(-1 344.3 114.7)"/><ellipse cx="200.2" cy="146.9" rx="0.7" ry="0.7" transform="rotate(-22 200.2 146.9)"/><ellipse cx="93.7" cy="21.1" rx="1.7" ry="1.3" transform="rotate(-25 93.7 21.1)"/><ellipse cx="174.9" cy="131.4" rx="2.2" ry="1.0" transform="rotate(-17 174.9 131.4)"/><ellipse cx="192.9" cy="151.4" rx="0.6" ry="0.5" transform="rotate(40 192.9 151.4)"/><ellipse cx="147.0" cy="18.8" rx="0.9" ry="0.7" transform="rotate(1 147.0 18.8)"/><ellipse cx="316.7" cy="86.9" rx="2.1" ry="1.3" transform="rotate(6 316.7 86.9)"/><ellipse cx="286.9" cy="186.7" rx="1.7" ry="0.9" transform="rotate(30 286.9 186.7)"/><ellipse cx="70.7" cy="21.0" rx="0.7" ry="0.9" transform="rotate(-19 70.7 21.0)"/><ellipse cx="150.9" cy="64.5" rx="2.2" ry="0.7" transform="rotate(19 150.9 64.5)"/><ellipse cx="151.9" cy="101.4" rx="1.2" ry="0.6" transform="rotate(-41 151.9 101.4)"/><ellipse cx="122.0" cy="26.1" rx="1.3" ry="0.6" transform="rotate(49 122.0 26.1)"/><ellipse cx="138.2" cy="99.0" rx="2.0" ry="1.1" transform="rotate(-10 138.2 99.0)"/><ellipse cx="188.4" cy="107.7" rx="1.1" ry="0.7" transform="rotate(-53 188.4 107.7)"/><ellipse cx="207.5" cy="95.6" rx="0.5" ry="0.8" transform="rotate(51 207.5 95.6)"/><ellipse cx="202.4" cy="102.5" rx="0.6" ry="1.2" transform="rotate(-32 202.4 102.5)"/><ellipse cx="136.1" cy="85.9" rx="1.7" ry="0.5" transform="rotate(-52 136.1 85.9)"/><ellipse cx="152.1" cy="119.4" rx="2.1" ry="1.0" transform="rotate(46 152.1 119.4)"/><ellipse cx="208.2" cy="158.0" rx="0.9" ry="1.4" transform="rotate(25 208.2 158.0)"/><ellipse cx="190.3" cy="154.3" rx="1.6" ry="1.3" transform="rotate(-33 190.3 154.3)"/><ellipse cx="190.5" cy="76.4" rx="0.8" ry="1.2" transform="rotate(29 190.5 76.4)"/><ellipse cx="217.7" cy="162.7" rx="2.1" ry="0.7" transform="rotate(38 217.7 162.7)"/><ellipse cx="300.1" cy="148.1" rx="2.1" ry="0.9" transform="rotate(-38 300.1 148.1)"/><ellipse cx="355.2" cy="142.4" rx="0.8" ry="1.3" transform="rotate(30 355.2 142.4)"/><ellipse cx="177.0" cy="134.7" rx="1.1" ry="0.6" transform="rotate(-60 177.0 134.7)"/><ellipse cx="169.9" cy="46.1" rx="1.9" ry="0.8" transform="rotate(-54 169.9 46.1)"/><ellipse cx="207.6" cy="134.9" rx="2.1" ry="0.6" transform="rotate(-16 207.6 134.9)"/><ellipse cx="187.4" cy="48.3" rx="1.8" ry="0.4" transform="rotate(-56 187.4 48.3)"/><ellipse cx="75.1" cy="22.6" rx="0.9" ry="1.1" transform="rotate(48 75.1 22.6)"/><ellipse cx="139.5" cy="69.3" rx="1.0" ry="0.7" transform="rotate(-60 139.5 69.3)"/><ellipse cx="113.9" cy="50.4" rx="1.8" ry="1.2" transform="rotate(33 113.9 50.4)"/><ellipse cx="250.7" cy="142.6" rx="1.0" ry="0.8" transform="rotate(34 250.7 142.6)"/><ellipse cx="297.6" cy="155.9" rx="0.6" ry="0.4" transform="rotate(6 297.6 155.9)"/><ellipse cx="269.1" cy="175.8" rx="1.9" ry="0.7" transform="rotate(8 269.1 175.8)"/><ellipse cx="175.2" cy="64.7" rx="0.8" ry="0.6" transform="rotate(-31 175.2 64.7)"/><ellipse cx="104.4" cy="31.4" rx="1.5" ry="0.7" transform="rotate(-12 104.4 31.4)"/><ellipse cx="129.5" cy="49.1" rx="1.6" ry="1.4" transform="rotate(-48 129.5 49.1)"/><ellipse cx="354.8" cy="135.0" rx="2.0" ry="0.8" transform="rotate(-29 354.8 135.0)"/><ellipse cx="254.8" cy="160.7" rx="1.1" ry="0.5" transform="rotate(-36 254.8 160.7)"/><ellipse cx="137.1" cy="93.2" rx="1.6" ry="0.6" transform="rotate(-59 137.1 93.2)"/><ellipse cx="160.4" cy="77.3" rx="0.8" ry="0.7" transform="rotate(-36 160.4 77.3)"/><ellipse cx="311.3" cy="103.1" rx="0.6" ry="0.5" transform="rotate(-13 311.3 103.1)"/><ellipse cx="362.2" cy="145.2" rx="1.5" ry="0.8" transform="rotate(-10 362.2 145.2)"/><ellipse cx="289.6" cy="163.0" rx="0.5" ry="1.3" transform="rotate(-9 289.6 163.0)"/><ellipse cx="319.4" cy="129.1" rx="2.0" ry="0.9" transform="rotate(-40 319.4 129.1)"/><ellipse cx="174.5" cy="111.3" rx="0.7" ry="0.7" transform="rotate(3 174.5 111.3)"/><ellipse cx="95.8" cy="16.9" rx="2.2" ry="0.9" transform="rotate(-54 95.8 16.9)"/><ellipse cx="353.5" cy="132.3" rx="2.0" ry="1.0" transform="rotate(39 353.5 132.3)"/><ellipse cx="106.6" cy="54.2" rx="0.9" ry="0.8" transform="rotate(42 106.6 54.2)"/><ellipse cx="322.2" cy="166.2" rx="0.9" ry="0.8" transform="rotate(2 322.2 166.2)"/><ellipse cx="134.6" cy="67.5" rx="2.0" ry="0.4" transform="rotate(7 134.6 67.5)"/><ellipse cx="257.1" cy="146.2" rx="1.2" ry="1.0" transform="rotate(-9 257.1 146.2)"/><ellipse cx="130.8" cy="59.1" rx="1.8" ry="0.9" transform="rotate(-38 130.8 59.1)"/><ellipse cx="260.1" cy="181.8" rx="1.7" ry="1.2" transform="rotate(1 260.1 181.8)"/><ellipse cx="176.8" cy="14.9" rx="0.7" ry="1.3" transform="rotate(60 176.8 14.9)"/><ellipse cx="298.7" cy="170.0" rx="2.0" ry="0.7" transform="rotate(38 298.7 170.0)"/><ellipse cx="139.7" cy="111.1" rx="1.0" ry="0.4" transform="rotate(-38 139.7 111.1)"/><ellipse cx="106.9" cy="18.6" rx="1.7" ry="1.3" transform="rotate(-40 106.9 18.6)"/><ellipse cx="307.9" cy="176.8" rx="1.4" ry="1.0" transform="rotate(-17 307.9 176.8)"/><ellipse cx="312.1" cy="153.1" rx="2.2" ry="1.0" transform="rotate(-17 312.1 153.1)"/><ellipse cx="301.4" cy="122.7" rx="0.8" ry="1.1" transform="rotate(-54 301.4 122.7)"/><ellipse cx="319.2" cy="154.9" rx="1.6" ry="1.4" transform="rotate(10 319.2 154.9)"/><ellipse cx="103.1" cy="89.9" rx="1.2" ry="0.9" transform="rotate(47 103.1 89.9)"/><ellipse cx="265.5" cy="190.7" rx="0.5" ry="0.8" transform="rotate(-47 265.5 190.7)"/><ellipse cx="120.8" cy="88.3" rx="1.3" ry="0.5" transform="rotate(52 120.8 88.3)"/><ellipse cx="184.5" cy="153.2" rx="0.5" ry="1.0" transform="rotate(7 184.5 153.2)"/><ellipse cx="167.9" cy="84.0" rx="1.3" ry="1.3" transform="rotate(28 167.9 84.0)"/><ellipse cx="135.1" cy="26.7" rx="0.6" ry="0.9" transform="rotate(-11 135.1 26.7)"/><ellipse cx="200.8" cy="159.4" rx="0.7" ry="0.6" transform="rotate(-55 200.8 159.4)"/><ellipse cx="163.1" cy="62.2" rx="1.7" ry="1.2" transform="rotate(25 163.1 62.2)"/><ellipse cx="140.7" cy="102.0" rx="1.2" ry="1.2" transform="rotate(3 140.7 102.0)"/><ellipse cx="140.5" cy="84.7" rx="2.1" ry="0.6" transform="rotate(46 140.5 84.7)"/><ellipse cx="131.1" cy="63.4" rx="2.1" ry="1.1" transform="rotate(-21 131.1 63.4)"/><ellipse cx="338.7" cy="142.5" rx="0.9" ry="1.3" transform="rotate(16 338.7 142.5)"/><ellipse cx="331.4" cy="123.6" rx="1.7" ry="1.0" transform="rotate(-23 331.4 123.6)"/><ellipse cx="123.3" cy="88.6" rx="0.6" ry="1.3" transform="rotate(-43 123.3 88.6)"/><ellipse cx="354.4" cy="139.7" rx="0.7" ry="0.4" transform="rotate(-55 354.4 139.7)"/><ellipse cx="172.1" cy="47.0" rx="1.9" ry="1.3" transform="rotate(-52 172.1 47.0)"/><ellipse cx="66.1" cy="40.1" rx="1.9" ry="1.0" transform="rotate(39 66.1 40.1)"/><ellipse cx="258.5" cy="149.4" rx="0.7" ry="0.5" transform="rotate(31 258.5 149.4)"/><ellipse cx="285.7" cy="135.7" rx="1.0" ry="1.4" transform="rotate(0 285.7 135.7)"/><ellipse cx="195.6" cy="57.0" rx="1.1" ry="1.1" transform="rotate(5 195.6 57.0)"/><ellipse cx="124.8" cy="36.6" rx="0.7" ry="1.2" transform="rotate(-40 124.8 36.6)"/><ellipse cx="166.9" cy="43.7" rx="0.9" ry="1.3" transform="rotate(-26 166.9 43.7)"/><ellipse cx="124.2" cy="72.9" rx="1.3" ry="0.5" transform="rotate(16 124.2 72.9)"/><ellipse cx="81.0" cy="53.7" rx="1.7" ry="1.2" transform="rotate(15 81.0 53.7)"/><ellipse cx="169.6" cy="130.0" rx="1.2" ry="1.3" transform="rotate(-50 169.6 130.0)"/><ellipse cx="177.2" cy="31.5" rx="0.9" ry="0.9" transform="rotate(4 177.2 31.5)"/><ellipse cx="294.1" cy="168.3" rx="1.2" ry="1.2" transform="rotate(10 294.1 168.3)"/><ellipse cx="340.3" cy="157.5" rx="0.8" ry="0.7" transform="rotate(24 340.3 157.5)"/><ellipse cx="326.9" cy="170.7" rx="0.8" ry="0.6" transform="rotate(-21 326.9 170.7)"/><ellipse cx="223.3" cy="169.7" rx="1.1" ry="0.6" transform="rotate(57 223.3 169.7)"/></g>
<g fill="#aad3df" opacity=".8"><ellipse cx="294.3" cy="143.3" rx="7.0" ry="1.2" transform="rotate(5 294.3 143.3)"/><ellipse cx="326.6" cy="162.8" rx="2.2" ry="2.2" transform="rotate(0 326.6 162.8)"/><ellipse cx="310.9" cy="182.7" rx="1.8" ry="1.1" transform="rotate(0 310.9 182.7)"/><ellipse cx="178.2" cy="146.9" rx="2.4" ry="1.2" transform="rotate(-10 178.2 146.9)"/><ellipse cx="202.8" cy="177.6" rx="2.2" ry="1.8" transform="rotate(0 202.8 177.6)"/><ellipse cx="269.0" cy="314.3" rx="1.5" ry="1.5" transform="rotate(0 269.0 314.3)"/><ellipse cx="119.0" cy="232.3" rx="1.6" ry="2.4" transform="rotate(15 119.0 232.3)"/><ellipse cx="162.6" cy="105.9" rx="2.2" ry="1.8" transform="rotate(0 162.6 105.9)"/><ellipse cx="170.6" cy="58.4" rx="2.8" ry="2.0" transform="rotate(0 170.6 58.4)"/><ellipse cx="315.2" cy="37.8" rx="2.6" ry="2.0" transform="rotate(0 315.2 37.8)"/><ellipse cx="316.6" cy="20.5" rx="4.0" ry="2.2" transform="rotate(10 316.6 20.5)"/><ellipse cx="347.9" cy="140.9" rx="3.4" ry="1.6" transform="rotate(-10 347.9 140.9)"/><ellipse cx="302.9" cy="165.4" rx="1.6" ry="2.6" transform="rotate(25 302.9 165.4)"/><ellipse cx="232.7" cy="173.6" rx="2.0" ry="2.2" transform="rotate(0 232.7 173.6)"/><ellipse cx="197.2" cy="47.2" rx="5.5" ry="1.1" transform="rotate(-5 197.2 47.2)"/><ellipse cx="299.1" cy="122.6" rx="2.4" ry="1.2" transform="rotate(0 299.1 122.6)"/><ellipse cx="320.4" cy="123.4" rx="2.0" ry="1.2" transform="rotate(30 320.4 123.4)"/><ellipse cx="351.2" cy="125.1" rx="1.5" ry="1.0" transform="rotate(0 351.2 125.1)"/><ellipse cx="135.5" cy="51.0" rx="2.5" ry="1.2" transform="rotate(-20 135.5 51.0)"/><ellipse cx="141.2" cy="114.8" rx="1.8" ry="1.2" transform="rotate(0 141.2 114.8)"/><ellipse cx="185.3" cy="122.6" rx="2.4" ry="1.0" transform="rotate(-30 185.3 122.6)"/><ellipse cx="199.5" cy="139.2" rx="1.6" ry="1.0" transform="rotate(0 199.5 139.2)"/><ellipse cx="220.9" cy="165.0" rx="2.2" ry="1.0" transform="rotate(20 220.9 165.0)"/><ellipse cx="226.1" cy="151.2" rx="1.6" ry="0.9" transform="rotate(0 226.1 151.2)"/></g>
<path d="M68.2 179.8L201.2 179.8L201.2 177.0L203.8 182.0L211.4 182.7L218.5 186.6L225.6 186.2L228.0 187.0M251.2 197.4L256.4 200.2L261.2 205.6L261.6 220.8L258.3 226.6L261.2 229.1L277.7 222.1L277.7 218.9L288.2 216.6L290.5 212.9L298.1 207.6L313.3 207.6L319.0 201.5L320.4 196.0L324.2 190.8L328.5 191.5L330.8 193.3L330.8 202.9L332.7 206.3L334.6 208.3M-16.1 -24.3L-16.1 86.5L-6.7 88.4L0.5 98.7L9.9 91.2L19.4 103.2L27.5 120.0L36.0 125.1L35.1 133.5L33.2 136.0M97.1 283.9L108.5 282.8L126.1 290.6L139.3 290.6L139.3 287.9L147.4 287.9L155.0 294.5L156.9 300.0L163.5 303.8L166.4 299.4L171.6 298.9L176.8 307.0L180.6 311.3L182.5 317.2L191.5 319.8M215.2 377.5L215.2 373.6L217.5 369.7L223.7 369.7L219.0 364.0L220.9 364.0L220.9 361.2L229.6 361.2L229.6 370.6L230.8 370.6M229.6 361.2L233.7 357.7M233.7 371.6L229.4 375.6L228.7 378.0L225.1 381.2M228.7 378.0L232.7 380.2L236.0 382.9M238.4 384.8L241.2 380.9L246.0 380.5L250.2 376.0L257.8 375.1M246.0 394.1L250.7 394.5L255.5 395.0M259.3 408.5L259.3 403.7L260.7 401.3M285.3 406.1L286.3 409.4L283.0 412.8M314.2 390.7L309.5 394.1L306.2 400.3L309.0 407.0L310.9 411.8L319.9 413.7L323.2 418.0L332.7 418.0M367.8 406.6L368.7 408.0L362.6 413.7L362.1 418.5M312.1 351.7L312.3 356.2L310.9 357.2L312.1 360.0M617.6 133.1L613.8 137.6L617.6 140.5L622.3 141.3M643.9 218.5L648.9 221.4L655.5 222.1L660.3 224.0L667.1 224.3M610.3 227.9L613.3 226.6L620.9 227.9L622.8 229.8L619.5 233.6L619.0 241.6L616.7 242.3L619.0 245.9L617.6 249.6L619.0 250.8L616.7 255.0L617.1 256.8M664.3 164.3L667.4 167.3L672.1 172.5L675.0 171.4L679.7 175.8L682.5 176.5L691.1 179.8L688.2 189.8M688.2 189.8L681.6 198.8L685.4 201.5L684.0 206.9L688.7 213.6L687.8 215.6M668.3 162.4L672.6 162.4L675.9 161.6L680.2 164.7L679.2 166.5L681.1 166.9M681.1 166.9L680.6 159.0L684.4 157.8L685.6 154.3L686.3 147.3M641.8 269.1L644.1 277.2L646.5 284.5L635.1 288.4L634.7 292.9L628.5 296.7L625.2 300.0L611.1 304.9L611.1 310.4M611.1 310.4L589.8 310.4M611.1 312.4L611.1 319.3L595.3 319.3L595.3 332.6L590.6 334.9L590.1 343.5L571.6 343.5M611.1 312.4L629.3 324.5M629.3 324.5L621.4 324.5L626.1 372.6L601.0 373.1L596.3 376.0L594.4 376.3M629.3 324.5L657.7 344.6L657.7 346.7L667.4 351.2L667.8 355.2L672.3 354.5M672.3 354.5L679.7 353.0L692.0 343.6M574.0 369.7L583.5 366.9L590.6 372.6L594.4 376.3M594.4 376.3L598.2 387.3M573.0 388.0L587.3 386.5L598.2 387.8M572.6 381.9L580.6 380.9L586.8 382.4L580.6 383.4L573.0 384.4M581.1 394.5L587.3 391.1L587.3 386.5M598.2 387.8L608.1 388.2L612.9 394.5L614.3 398.4M589.2 403.9L597.7 399.4L602.0 403.7L603.4 406.6M597.7 414.0L603.4 406.6M603.4 406.6L608.1 411.8L611.9 410.9L616.7 419.5M611.9 410.9L614.3 406.6L614.3 398.4M614.3 398.4L622.8 396.5L626.1 397.4M626.1 397.4L627.6 390.7L631.8 386.3L633.7 382.9L638.5 380.0L648.9 374.6L653.1 375.1L656.9 375.6M626.1 397.4L629.9 400.8L639.2 400.8L638.9 394.5L651.5 394.1M639.2 400.8L640.4 408.0L637.0 414.7L638.0 419.9M651.5 394.1L654.1 401.8L655.0 409.0L655.5 416.1L657.9 418.0M656.5 394.5L659.8 404.2L659.8 417.6M651.5 394.1L656.5 394.5L663.1 388.7M663.1 388.7L669.3 391.1L669.7 398.4L665.5 404.2L665.0 416.6M656.9 375.6L668.8 373.1L672.1 367.7L672.3 354.5M656.9 375.6L653.6 380.0L656.9 383.4L662.6 387.8L663.1 388.7M669.3 391.1L671.6 382.4L684.4 384.4L692.5 384.6L702.9 382.9L715.2 381.9M715.2 381.9L719.5 387.8L721.4 392.1L714.8 401.3L710.0 407.0L707.7 413.7L702.4 413.3L698.2 416.1L693.0 424.2M715.2 381.9L716.7 377.5L725.7 365.7L726.1 350.7L728.0 348.2L723.3 334.9M719.5 387.8L723.3 389.2L723.8 395.5L725.7 399.4L718.1 401.3L724.2 411.3M724.2 411.3L729.9 410.4L740.4 408.5L742.3 404.2L755.1 396.5L760.7 394.5M724.2 411.3L720.9 417.6L721.4 423.3M760.7 394.5L758.9 386.8L757.4 381.9L758.9 379.0L761.2 371.6L766.0 371.6L766.0 352.7M760.7 394.5L764.1 399.8L763.6 405.1L771.6 409.9L782.1 421.4M764.1 399.8L777.8 401.3L784.9 402.7L792.0 400.3L794.4 397.9L800.6 400.3L805.8 391.1L809.6 388.7L809.6 395.5L812.9 401.8L813.8 406.1M813.8 406.1L808.6 409.0L816.7 415.2L822.4 421.8M813.8 406.1L814.8 396.5L818.1 390.7L823.8 386.3L825.2 378.5L824.7 374.6M825.2 378.5L831.8 375.6L837.5 377.0L845.6 379.5L849.9 383.4L853.2 387.3M853.2 387.3L850.3 391.1L850.3 394.5L855.5 394.8L857.2 392.4M855.5 394.8L856.0 401.3L860.8 404.2L875.0 409.0L879.7 409.0L865.5 423.3" fill="none" stroke="#c6a6c8" stroke-width="1" stroke-linejoin="round" opacity=".75"/>
<g font-family="Liberation Sans,sans-serif" font-size="8.6" fill="#8d6a92" text-anchor="middle" letter-spacing=".55" stroke="#f6f3ef" stroke-width="1.6" paint-order="stroke" stroke-linejoin="round">
<text x="166.5" y="68.0">Canada</text>
<text x="183.0" y="257.5">United States</text>
<text x="183.0" y="267.5">of America</text>
<text x="168.0" y="334.5">México</text>
<text x="563.5" y="42.5">Ísland</text>
<text x="633.5" y="133.5">United Kingdom</text>
<text x="661.5" y="198.5">France</text>
<text x="636.5" y="243.5">España</text>
<text x="654.5" y="301.0">Algérie</text>
<text x="655.0" y="311.5" font-size="6.6" letter-spacing="0">ⵍⵣⵣⴰⵢⴻⵔ</text>
<text x="655.0" y="321.5" font-size="8" letter-spacing="0">الجزائر</text>
<text x="597.5" y="343.0">Mauritanie</text>
<text x="597.5" y="353.5" font-size="8" letter-spacing="0">موريتانيا</text>
<text x="649.0" y="365.5">Mali</text>
<text x="699.5" y="366.0">Niger</text>
<text x="690.0" y="407.5">Nigeria</text>
<text x="750.0" y="404.0">Ködörösêse</text>
<text x="750.0" y="414.5">tî Bêafrika /</text>
<text x="826.0" y="407.5" font-size="8" letter-spacing="0">ኢትዮጵያ</text>
<text x="702.0" y="167.0">Deutschland</text>
</g>
<circle cx="12.0" cy="82.0" r="2.1" fill="#3388ff"/>
<circle cx="401.0" cy="190.0" r="2.1" fill="#3388ff"/>
<circle cx="886.0" cy="393.0" r="2.1" fill="#3388ff"/>
<path d="M886 393v9" stroke="#3388ff" stroke-width=".8"/>
<g font-family="Liberation Sans,sans-serif" font-size="10" text-anchor="middle">
<circle cx="545.0" cy="36.0" r="16.7" fill="#b9e9a2" fill-opacity=".8"/><circle cx="545.0" cy="36.0" r="12.6" fill="#7dd163" fill-opacity=".92"/><text x="545.0" y="39.6" fill="#2a2a2a">2</text>
<circle cx="28.0" cy="130.0" r="16.7" fill="#b9e9a2" fill-opacity=".8"/><circle cx="28.0" cy="130.0" r="12.6" fill="#7dd163" fill-opacity=".92"/><text x="28.0" y="133.6" fill="#2a2a2a">3</text>
<circle cx="118.0" cy="155.0" r="16.7" fill="#b9e9a2" fill-opacity=".8"/><circle cx="118.0" cy="155.0" r="12.6" fill="#7dd163" fill-opacity=".92"/><text x="118.0" y="158.6" fill="#2a2a2a">14</text>
<circle cx="75.3" cy="196.0" r="16.7" fill="#b9e9a2" fill-opacity=".8"/><circle cx="75.3" cy="196.0" r="12.6" fill="#7dd163" fill-opacity=".92"/><text x="75.3" y="199.6" fill="#2a2a2a">134</text>
<circle cx="114.0" cy="199.3" r="16.7" fill="#b9e9a2" fill-opacity=".8"/><circle cx="114.0" cy="199.3" r="12.6" fill="#7dd163" fill-opacity=".92"/><text x="114.0" y="202.9" fill="#2a2a2a">10</text>
<circle cx="207.3" cy="199.8" r="16.7" fill="#b9e9a2" fill-opacity=".8"/><circle cx="207.3" cy="199.8" r="12.6" fill="#7dd163" fill-opacity=".92"/><text x="207.3" y="203.4" fill="#2a2a2a">16</text>
<circle cx="262.0" cy="199.0" r="16.7" fill="#b9e9a2" fill-opacity=".8"/><circle cx="262.0" cy="199.0" r="12.6" fill="#7dd163" fill-opacity=".92"/><text x="262.0" y="202.6" fill="#2a2a2a">3</text>
<circle cx="323.0" cy="204.0" r="16.7" fill="#b9e9a2" fill-opacity=".8"/><circle cx="323.0" cy="204.0" r="12.6" fill="#7dd163" fill-opacity=".92"/><text x="323.0" y="207.6" fill="#2a2a2a">26</text>
<circle cx="621.0" cy="141.0" r="16.7" fill="#b9e9a2" fill-opacity=".8"/><circle cx="621.0" cy="141.0" r="12.6" fill="#7dd163" fill-opacity=".92"/><text x="621.0" y="144.6" fill="#2a2a2a">22</text>
<circle cx="645.0" cy="158.0" r="16.7" fill="#b9e9a2" fill-opacity=".8"/><circle cx="645.0" cy="158.0" r="12.6" fill="#7dd163" fill-opacity=".92"/><text x="645.0" y="161.6" fill="#2a2a2a">781</text>
<circle cx="691.3" cy="169.3" r="16.7" fill="#b9e9a2" fill-opacity=".8"/><circle cx="691.3" cy="169.3" r="12.6" fill="#7dd163" fill-opacity=".92"/><text x="691.3" y="172.9" fill="#2a2a2a">22</text>
<circle cx="89.0" cy="246.5" r="16.7" fill="#b9e9a2" fill-opacity=".8"/><circle cx="89.0" cy="246.5" r="12.6" fill="#7dd163" fill-opacity=".92"/><text x="89.0" y="250.1" fill="#2a2a2a">123</text>
<circle cx="191.5" cy="246.5" r="16.7" fill="#b9e9a2" fill-opacity=".8"/><circle cx="191.5" cy="246.5" r="12.6" fill="#7dd163" fill-opacity=".92"/><text x="191.5" y="250.1" fill="#2a2a2a">392</text>
<circle cx="236.0" cy="236.8" r="16.7" fill="#b9e9a2" fill-opacity=".8"/><circle cx="236.0" cy="236.8" r="12.6" fill="#7dd163" fill-opacity=".92"/><text x="236.0" y="240.4" fill="#2a2a2a">107</text>
<circle cx="284.0" cy="238.5" r="16.7" fill="#b9e9a2" fill-opacity=".8"/><circle cx="284.0" cy="238.5" r="12.6" fill="#7dd163" fill-opacity=".92"/><text x="284.0" y="242.1" fill="#2a2a2a">877</text>
<circle cx="618.3" cy="238.5" r="16.7" fill="#b9e9a2" fill-opacity=".8"/><circle cx="618.3" cy="238.5" r="12.6" fill="#7dd163" fill-opacity=".92"/><text x="618.3" y="242.1" fill="#2a2a2a">278</text>
<circle cx="669.0" cy="233.5" r="16.7" fill="#b9e9a2" fill-opacity=".8"/><circle cx="669.0" cy="233.5" r="12.6" fill="#7dd163" fill-opacity=".92"/><text x="669.0" y="237.1" fill="#2a2a2a">60</text>
<circle cx="104.0" cy="275.3" r="16.7" fill="#b9e9a2" fill-opacity=".8"/><circle cx="104.0" cy="275.3" r="12.6" fill="#7dd163" fill-opacity=".92"/><text x="104.0" y="278.9" fill="#2a2a2a">199</text>
<circle cx="192.8" cy="290.3" r="16.7" fill="#b9e9a2" fill-opacity=".8"/><circle cx="192.8" cy="290.3" r="12.6" fill="#7dd163" fill-opacity=".92"/><text x="192.8" y="293.9" fill="#2a2a2a">75</text>
<circle cx="247.8" cy="280.0" r="16.7" fill="#b9e9a2" fill-opacity=".8"/><circle cx="247.8" cy="280.0" r="12.6" fill="#7dd163" fill-opacity=".92"/><text x="247.8" y="283.6" fill="#2a2a2a">33</text>
<circle cx="622.0" cy="271.0" r="16.7" fill="#b9e9a2" fill-opacity=".8"/><circle cx="622.0" cy="271.0" r="12.6" fill="#7dd163" fill-opacity=".92"/><text x="622.0" y="274.6" fill="#2a2a2a">28</text>
<circle cx="266.0" cy="313.5" r="16.7" fill="#b9e9a2" fill-opacity=".8"/><circle cx="266.0" cy="313.5" r="12.6" fill="#7dd163" fill-opacity=".92"/><text x="266.0" y="317.1" fill="#2a2a2a">60</text>
<circle cx="576.5" cy="306.8" r="16.7" fill="#b9e9a2" fill-opacity=".8"/><circle cx="576.5" cy="306.8" r="12.6" fill="#7dd163" fill-opacity=".92"/><text x="576.5" y="310.4" fill="#2a2a2a">3</text>
<circle cx="180.3" cy="351.5" r="16.7" fill="#b9e9a2" fill-opacity=".8"/><circle cx="180.3" cy="351.5" r="12.6" fill="#7dd163" fill-opacity=".92"/><text x="180.3" y="355.1" fill="#2a2a2a">25</text>
<circle cx="218.3" cy="362.5" r="16.7" fill="#b9e9a2" fill-opacity=".8"/><circle cx="218.3" cy="362.5" r="12.6" fill="#7dd163" fill-opacity=".92"/><text x="218.3" y="366.1" fill="#2a2a2a">15</text>
<circle cx="323.0" cy="374.5" r="16.7" fill="#b9e9a2" fill-opacity=".8"/><circle cx="323.0" cy="374.5" r="12.6" fill="#7dd163" fill-opacity=".92"/><text x="323.0" y="378.1" fill="#2a2a2a">24</text>
<circle cx="366.3" cy="388.5" r="16.7" fill="#b9e9a2" fill-opacity=".8"/><circle cx="366.3" cy="388.5" r="12.6" fill="#7dd163" fill-opacity=".92"/><text x="366.3" y="392.1" fill="#2a2a2a">3</text>
<circle cx="559.5" cy="376.0" r="16.7" fill="#b9e9a2" fill-opacity=".8"/><circle cx="559.5" cy="376.0" r="12.6" fill="#7dd163" fill-opacity=".92"/><text x="559.5" y="379.6" fill="#2a2a2a">3</text>
<circle cx="292.0" cy="418.8" r="16.7" fill="#b9e9a2" fill-opacity=".8"/><circle cx="292.0" cy="418.8" r="12.6" fill="#7dd163" fill-opacity=".92"/><text x="292.0" y="422.4" fill="#2a2a2a">31</text>
<circle cx="650.3" cy="419.0" r="16.7" fill="#b9e9a2" fill-opacity=".8"/><circle cx="650.3" cy="419.0" r="12.6" fill="#7dd163" fill-opacity=".92"/><text x="650.3" y="422.6" fill="#2a2a2a">33</text>
<circle cx="675.3" cy="417.0" r="16.7" fill="#b9e9a2" fill-opacity=".8"/><circle cx="675.3" cy="417.0" r="12.6" fill="#7dd163" fill-opacity=".92"/><text x="675.3" y="420.6" fill="#2a2a2a">33</text>
<circle cx="842.0" cy="404.0" r="16.7" fill="#b9e9a2" fill-opacity=".8"/><circle cx="842.0" cy="404.0" r="12.6" fill="#7dd163" fill-opacity=".92"/><text x="842.0" y="407.6" fill="#2a2a2a">3</text>
<circle cx="1023.0" cy="396.0" r="16.7" fill="#b9e9a2" fill-opacity=".8"/><circle cx="1023.0" cy="396.0" r="12.6" fill="#7dd163" fill-opacity=".92"/><text x="1023.0" y="399.6" fill="#2a2a2a">77</text>
</g>
</svg>
  <div id="zoomc"><div><svg width="25" height="24" viewBox="0 0 25 24"><path d="M7.400 12.600h10.400M12.600 7.400v10.400" stroke="#111" stroke-width="1.350"/></svg></div><div><svg width="25" height="26" viewBox="0 0 25 26"><path d="M7.400 12.300h10.400" stroke="#111" stroke-width="1.350"/></svg></div></div>
  <div id="attr"><i></i><b>Leaflet</b> | &copy; <b>OpenStreetMap</b> contributors</div>
</div>

<!-- ===== FILTER PANEL ===== -->
<div id="obox3"></div>
<div id="panel">
  <div id="ptabs"><div class="a">New Filter</div><div class="b">Report's Saved Filters</div></div>
  <div id="psearch">
    <svg class="abs" style="left:8px;top:7px" width="16" height="16" viewBox="0 0 16 16"><circle cx="7" cy="7" r="5" fill="none" stroke="#555" stroke-width="1.100"/><path d="M10.700 10.700l3.600 3.600" stroke="#555" stroke-width="1.100" stroke-linecap="round"/></svg>
    <span>Search filters</span>
    <svg class="abs" style="left:365px;top:8px" width="17" height="15" viewBox="0 0 17 15"><path d="M11.300 1.300l4 3.100-6.200 6.900h-3.400l-3-2.400z" fill="none" stroke="#555" stroke-width="1.100" stroke-linejoin="round"/><path d="M5.700 5.700l4.300 3.500" stroke="#555" stroke-width="1"/><path d="M2.600 12.600h12.200" stroke="#555" stroke-width="1.100" stroke-linecap="round"/></svg>
  </div>
<div class="row" style="top:77.0px"><svg style="left:10px" width="15" height="28" viewBox="0 0 15 28"><g stroke="#b2b2b2" stroke-width="1" fill="none"><path d="M2.400 8.700v5.200M2.400 15.600v3.800M.800 15.600h3.200M6.900 8.700v1.300M6.900 11.200v8.200M5.300 11.200h3.200M11.500 8.700v5.200M11.500 15.600v3.800M9.900 15.600h3.200"/></g></svg><span>Browser Name</span><svg style="left:371px" width="15" height="28" viewBox="0 0 15 28"><circle cx="7.500" cy="13.400" r="5.900" fill="none" stroke="#8e8e8e" stroke-width="1"/><path d="M4.800 13.400h3.500" fill="none" stroke="#8e8e8e" stroke-width="1.100" stroke-linecap="round"/><path d="M7.600 11.200l2.700 2.200-2.700 2.200z" fill="#8e8e8e"/></svg></div>
<div class="row" style="top:105.3px"><svg style="left:10px" width="15" height="28" viewBox="0 0 15 28"><g stroke="#b2b2b2" stroke-width="1" fill="none"><path d="M2.400 8.700v5.200M2.400 15.600v3.800M.800 15.600h3.200M6.900 8.700v1.300M6.900 11.200v8.200M5.300 11.200h3.200M11.500 8.700v5.200M11.500 15.600v3.800M9.900 15.600h3.200"/></g></svg><span>Browser Version</span><svg style="left:371px" width="15" height="28" viewBox="0 0 15 28"><circle cx="7.500" cy="13.400" r="5.900" fill="none" stroke="#8e8e8e" stroke-width="1"/><path d="M4.800 13.400h3.500" fill="none" stroke="#8e8e8e" stroke-width="1.100" stroke-linecap="round"/><path d="M7.600 11.200l2.700 2.200-2.700 2.200z" fill="#8e8e8e"/></svg></div>
<div class="row" style="top:133.6px"><svg style="left:10px" width="15" height="28" viewBox="0 0 15 28"><g stroke="#b2b2b2" stroke-width="1" fill="none"><path d="M2.400 8.700v5.200M2.400 15.600v3.800M.800 15.600h3.200M6.900 8.700v1.300M6.900 11.200v8.200M5.300 11.200h3.200M11.500 8.700v5.200M11.500 15.600v3.800M9.900 15.600h3.200"/></g></svg><span>City of Visit</span><svg style="left:371px" width="15" height="28" viewBox="0 0 15 28"><circle cx="7.500" cy="13.400" r="5.900" fill="none" stroke="#8e8e8e" stroke-width="1"/><path d="M4.800 13.400h3.500" fill="none" stroke="#8e8e8e" stroke-width="1.100" stroke-linecap="round"/><path d="M7.600 11.200l2.700 2.200-2.700 2.200z" fill="#8e8e8e"/></svg></div>
<div class="row" style="top:161.9px"><svg style="left:10px" width="15" height="28" viewBox="0 0 15 28"><g stroke="#b2b2b2" stroke-width="1" fill="none"><path d="M2.400 8.700v5.200M2.400 15.600v3.800M.800 15.600h3.200M6.900 8.700v1.300M6.900 11.200v8.200M5.300 11.200h3.200M11.500 8.700v5.200M11.500 15.600v3.800M9.900 15.600h3.200"/></g></svg><span>Company Category Associated With Visit</span><svg style="left:371px" width="15" height="28" viewBox="0 0 15 28"><circle cx="7.500" cy="13.400" r="5.900" fill="none" stroke="#8e8e8e" stroke-width="1"/><path d="M4.800 13.400h3.500" fill="none" stroke="#8e8e8e" stroke-width="1.100" stroke-linecap="round"/><path d="M7.600 11.200l2.700 2.200-2.700 2.200z" fill="#8e8e8e"/></svg></div>
<div class="row" style="top:190.2px"><svg style="left:10px" width="15" height="28" viewBox="0 0 15 28"><g stroke="#b2b2b2" stroke-width="1" fill="none"><path d="M2.400 8.700v5.200M2.400 15.600v3.800M.800 15.600h3.200M6.900 8.700v1.300M6.900 11.200v8.200M5.300 11.200h3.200M11.500 8.700v5.200M11.500 15.600v3.800M9.900 15.600h3.200"/></g></svg><span>Company Name Associated With Visit</span><svg style="left:371px" width="15" height="28" viewBox="0 0 15 28"><circle cx="7.500" cy="13.400" r="5.900" fill="none" stroke="#8e8e8e" stroke-width="1"/><path d="M4.800 13.400h3.500" fill="none" stroke="#8e8e8e" stroke-width="1.100" stroke-linecap="round"/><path d="M7.600 11.200l2.700 2.200-2.700 2.200z" fill="#8e8e8e"/></svg></div>
<div class="row" style="top:218.5px"><svg style="left:10px" width="15" height="28" viewBox="0 0 15 28"><g stroke="#b2b2b2" stroke-width="1" fill="none"><path d="M2.400 8.700v5.200M2.400 15.600v3.800M.800 15.600h3.200M6.900 8.700v1.300M6.900 11.200v8.200M5.300 11.200h3.200M11.500 8.700v5.200M11.500 15.600v3.800M9.900 15.600h3.200"/></g></svg><span>Country Name</span><svg style="left:371px" width="15" height="28" viewBox="0 0 15 28"><circle cx="7.500" cy="13.400" r="5.900" fill="none" stroke="#8e8e8e" stroke-width="1"/><path d="M4.800 13.400h3.500" fill="none" stroke="#8e8e8e" stroke-width="1.100" stroke-linecap="round"/><path d="M7.600 11.200l2.700 2.200-2.700 2.200z" fill="#8e8e8e"/></svg></div>
<div class="row" style="top:246.8px"><svg style="left:10px" width="15" height="28" viewBox="0 0 15 28"><g stroke="#b2b2b2" stroke-width="1" fill="none"><path d="M2.400 8.700v5.200M2.400 15.600v3.800M.800 15.600h3.200M6.900 8.700v1.300M6.900 11.200v8.200M5.300 11.200h3.200M11.500 8.700v5.200M11.500 15.600v3.800M9.900 15.600h3.200"/></g></svg><span>Device Type</span><svg style="left:371px" width="15" height="28" viewBox="0 0 15 28"><circle cx="7.500" cy="13.400" r="5.900" fill="none" stroke="#8e8e8e" stroke-width="1"/><path d="M4.800 13.400h3.500" fill="none" stroke="#8e8e8e" stroke-width="1.100" stroke-linecap="round"/><path d="M7.600 11.200l2.700 2.200-2.700 2.200z" fill="#8e8e8e"/></svg></div>
<div class="row" style="top:275.1px"><svg style="left:10px" width="15" height="28" viewBox="0 0 15 28"><g stroke="#b2b2b2" stroke-width="1" fill="none"><path d="M2.400 8.700v5.200M2.400 15.600v3.800M.800 15.600h3.200M6.900 8.700v1.300M6.900 11.200v8.200M5.300 11.200h3.200M11.500 8.700v5.200M11.500 15.600v3.800M9.900 15.600h3.200"/></g></svg><span>IP</span><svg style="left:371px" width="15" height="28" viewBox="0 0 15 28"><circle cx="7.500" cy="13.400" r="5.900" fill="none" stroke="#8e8e8e" stroke-width="1"/><path d="M4.800 13.400h3.500" fill="none" stroke="#8e8e8e" stroke-width="1.100" stroke-linecap="round"/><path d="M7.600 11.200l2.700 2.200-2.700 2.200z" fill="#8e8e8e"/></svg></div>
<div class="row" style="top:303.4px"><svg style="left:10px" width="15" height="28" viewBox="0 0 15 28"><g stroke="#b2b2b2" stroke-width="1" fill="none"><path d="M2.400 8.700v5.200M2.400 15.600v3.800M.800 15.600h3.200M6.900 8.700v1.300M6.900 11.200v8.200M5.300 11.200h3.200M11.500 8.700v5.200M11.500 15.600v3.800M9.900 15.600h3.200"/></g></svg><span>Operating System</span><svg style="left:371px" width="15" height="28" viewBox="0 0 15 28"><circle cx="7.500" cy="13.400" r="5.900" fill="none" stroke="#8e8e8e" stroke-width="1"/><path d="M4.800 13.400h3.500" fill="none" stroke="#8e8e8e" stroke-width="1.100" stroke-linecap="round"/><path d="M7.600 11.200l2.700 2.200-2.700 2.200z" fill="#8e8e8e"/></svg></div>
  <div id="pscroll"></div>
  <div id="pclose">Close</div>
</div>

</body>
</html>
